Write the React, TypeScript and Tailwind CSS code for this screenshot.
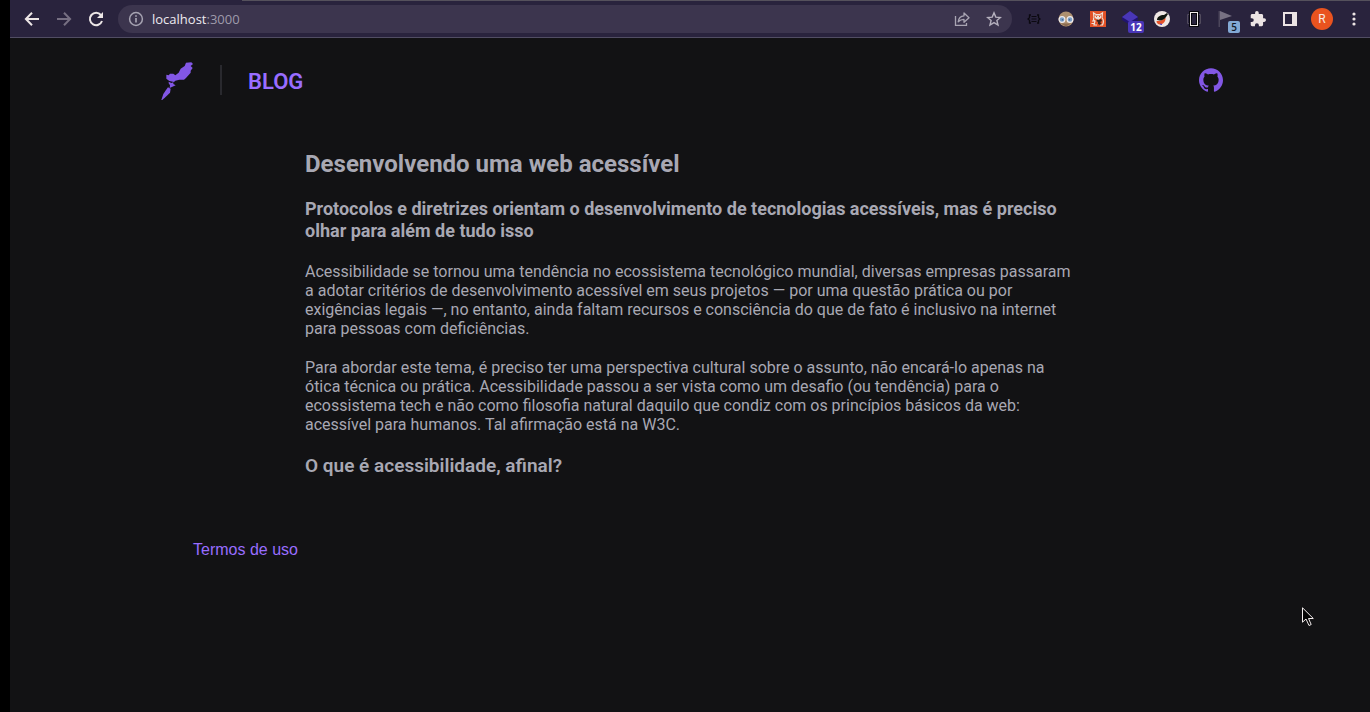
import type { ReactNode } from "react";

function ToolButton({ label, children }: { label: string; children: ReactNode }) {
  return (
    <button
      type="button"
      aria-label={label}
      className="flex h-8 w-8 shrink-0 items-center justify-center"
    >
      {children}
    </button>
  );
}

function BrowserBar() {
  return (
    <div className="border-b border-[#514d63] bg-[#29233d]">
      <div className="ml-[232px] h-px bg-[#55515c]" />
      <div className="flex h-9 items-center pl-1.5">
        <nav aria-label="Navegação" className="flex">
          <ToolButton label="Voltar">
            <svg width="16" height="16" viewBox="0 0 16 16" fill="none" stroke="#ece6e6" strokeWidth="2">
              <path d="M15 8H2.5M8 1.8 1.9 8 8 14.2" />
            </svg>
          </ToolButton>
          <ToolButton label="Avançar">
            <svg width="16" height="16" viewBox="0 0 16 16" fill="none" stroke="#766f82" strokeWidth="2">
              <path d="M1 8h12.5M8 1.8 14.1 8 8 14.2" />
            </svg>
          </ToolButton>
          <ToolButton label="Recarregar">
            <svg width="16" height="16" viewBox="0 0 16 16" fill="none">
              <path d="M12.9 4A6.2 6.2 0 1 0 14 10" stroke="#ece6e6" strokeWidth="2" />
              <path d="M15 1v6H9z" fill="#ece6e6" />
            </svg>
          </ToolButton>
        </nav>

        <div className="mx-1.5 flex h-7 min-w-0 flex-1 items-center rounded-full bg-[#3c354e] pl-2.5">
          <svg width="16" height="16" viewBox="0 0 16 16" fill="none" stroke="#a6a3b2" strokeWidth="1.5">
            <circle cx="8" cy="8" r="6.4" />
            <path d="M8 7v4.5M8 4.2v1.6" strokeWidth="1.7" />
          </svg>
          <div className="ml-2 flex-1 font-['Open_Sans',sans-serif] text-[13px] leading-5 text-[#9f9bab]">
            <span className="text-[#eeeaf0]">localhost</span>:3000
          </div>
          <ToolButton label="Compartilhar">
            <svg width="16" height="16" viewBox="0 0 16 16" fill="none" stroke="#a9a5b3" strokeWidth="1.3">
              <path d="M1.5 5v9.3h11V12" />
              <path d="M4.2 10.8C4.6 7.4 6.6 5 10 4.8V2l5 4.7-5 4.5V8.4c-2.6 0-4.3.8-5.8 2.4Z" strokeLinejoin="round" />
            </svg>
          </ToolButton>
          <ToolButton label="Favoritos">
            <svg width="16" height="16" viewBox="0 0 16 16" fill="none" stroke="#b5b0bd" strokeWidth="1.4">
              <path d="m8 1.9 1.8 4.2 4.6.4-3.5 3 1.1 4.5L8 11.6 4 14l1.1-4.5-3.500-3 4.600-.4Z" />
            </svg>
          </ToolButton>
          <span className="w-0.5" />
        </div>

        <div className="flex">
          <ToolButton label="Formatador JSON">
            <svg width="14" height="10" viewBox="0 0 14 10" fill="none" stroke="#0b0910" strokeWidth="1.3">
              <path d="M4 1H2.500v2.800L1 5l1.500 1.200V9H4M10 1h1.500v2.800L13 5l-1.500 1.200V9H10" />
              <path d="M4.500 2.500h5M4.500 5h5M4.500 7.500h5" strokeWidth="1" />
            </svg>
          </ToolButton>
          <ToolButton label="Leitura">
            <svg width="16" height="16" viewBox="0 0 16 16">
              <circle cx="8" cy="8" r="7.5" fill="#ad9070" />
              <path d="M3 12.500h10L8 15.500z" fill="#8b6c51" />
              <g fill="#7ba0c8" stroke="#f0eaea" strokeWidth="1.2">
                <circle cx="4" cy="8.5" r="2.9" />
                <circle cx="12" cy="8.5" r="2.9" />
              </g>
              <path d="M4.500 8v1.500M11.500 8v1.500" stroke="#4a6c95" strokeWidth="1.3" />
            </svg>
          </ToolButton>
          <ToolButton label="Octotree">
            <svg width="16" height="16" viewBox="0 0 16 16">
              <path d="M0 0h16v16H0z" fill="#e25227" />
              <g fill="none" stroke="#eee2d8" strokeWidth="1.2">
                <path d="M4 6.500 3.500 2l2.500 1.500h4L12.500 2 12 6.500" />
                <path d="M4 6.500c-1 2-.5 3 1 3.500L4 14h3M12 6.500c1.500 2 1.500 5.500.5 7.500H10M4.500 10H2M4 12.500H1.500" />
              </g>
              <path d="M5 4.500h6V7L8 9 5 7z" fill="#eee2d8" />
              <path d="m7 8.500 2 .5 2-1 1 2-2 1 1.500 1.500L10 14l-2-1v-2L6.500 10Z" fill="#39251d" />
              <path d="M6 5.500h1M9 5.500h1" stroke="#e25227" />
            </svg>
          </ToolButton>
          <ToolButton label="Complemento, 12 avisos">
            <span className="relative block h-4 w-4">
              <svg width="16" height="16" viewBox="0 0 16 16">
                <path d="M0 6v3l8 5 8-5V6z" fill="#21146e" />
                <path d="m8 0 8 6-8 5-8-5z" fill="#4936b8" />
              </svg>
              <span className="absolute top-2.5 left-1.5 flex h-3 w-4 items-center justify-center rounded-xs bg-[#4936b8] font-['Open_Sans',sans-serif] text-[10px] leading-3 font-bold text-white">
                12
              </span>
            </span>
          </ToolButton>
          <ToolButton label="Conta-gotas">
            <svg width="16" height="16" viewBox="0 0 16 16">
              <circle cx="8" cy="8" r="8" fill="#efe7e4" />
              <path d="M2.500 10c2 .5 6-.5 9-3.500.5 4-2.500 7-5.500 7-2 0-3.500-1.500-3.500-3.500Z" fill="#e7532b" />
              <path d="M3 9c0-3 3-5 7-5l3-2 1 1-2 3c-2 3-5 4-9 3Z" fill="#10160f" />
              <path d="m6 13 2 .5" stroke="#4038d0" />
            </svg>
          </ToolButton>
          <ToolButton label="Janela">
            <svg width="16" height="16" viewBox="0 0 16 16" fill="none">
              <path d="M1.500 3.500h13v9h-13z" stroke="#514b5d" />
              <path d="M3 0h10v16H3z" fill="#08070d" />
              <path d="M4 1h8v14H4z" fill="#f1ebeb" />
              <path d="M5 2h6v12H5z" fill="#08070d" />
              <path d="M6 3h4v10H6z" fill="#29233d" />
            </svg>
          </ToolButton>
          <ToolButton label="Sinalizador, 5 avisos">
            <span className="relative block h-4 w-4">
              <svg width="16" height="16" viewBox="0 0 16 16">
                <path d="M.5 0h1.500v16H.5z" fill="#4c465b" />
                <path d="M2 0 14 5 2 9z" fill="#777183" />
              </svg>
              <span className="absolute top-2.5 left-2.5 flex h-3 w-3 items-center justify-center rounded-xs bg-[#83a9d5] font-['Open_Sans',sans-serif] text-[10px] leading-3 font-semibold text-[#111827]">
                5
              </span>
            </span>
          </ToolButton>
          <ToolButton label="Extensões">
            <svg width="16" height="16" viewBox="1 1 22 22" fill="#ece4e4">
              <path d="M20.500 11H19V7c0-1.100-.9-2-2-2h-4V3.500a2.500 2.500 0 0 0-5 0V5H4c-1.100 0-1.990.9-1.990 2v3.800H3.500a2.700 2.700 0 0 1 0 5.400H2V20c0 1.100.9 2 2 2h3.800v-1.500a2.700 2.700 0 0 1 5.400 0V22H17c1.100 0 2-.9 2-2v-4h1.500a2.500 2.500 0 0 0 0-5Z" />
            </svg>
          </ToolButton>
          <ToolButton label="Painel lateral">
            <svg width="14" height="14" viewBox="0 0 14 14">
              <path d="M0 0h14v14H0zM2 2v10h7V2z" fill="#ece4e4" fillRule="evenodd" />
            </svg>
          </ToolButton>
          <ToolButton label="Perfil">
            <span className="flex size-[22px] items-center justify-center rounded-full bg-[#e9531f] font-[Roboto,sans-serif] text-xs text-[#f7e9e2]">
              R
            </span>
          </ToolButton>
          <ToolButton label="Menu">
            <svg width="4" height="14" viewBox="0 0 4 14" fill="#ece4e4">
              <circle cx="2" cy="2" r="1.6" />
              <circle cx="2" cy="7" r="1.6" />
              <circle cx="2" cy="12" r="1.6" />
            </svg>
          </ToolButton>
        </div>
      </div>
    </div>
  );
}

function RocketLogo() {
  return (
    <svg width="34" height="40" viewBox="6 6 102 120" fill="#8257e5">
      <path d="M84 14 100 13 105 18 98 24 104 30 98 38 98 44 84 60 78 65 64 65 52 68 48 72 34 69 25 62 25 50 32 52 36 47 46 47 52 52 62 44 68 32 80 24Z" />
      <path d="M32 71 40 75 46 73 46 78 53 82 40 88 35 90 36 82 32 76Z" />
      <path d="M30 88 38 92 36 104 22 118 9 129 16 108 24 96Z" />
    </svg>
  );
}

function GithubMark() {
  return (
    <svg width="26" height="26" viewBox="-1 -1 26 26" fill="#8257e5" aria-hidden="true">
      <path d="M12 .297c-6.630 0-12 5.373-12 12 0 5.303 3.438 9.800 8.205 11.385.6.113.82-.258.82-.577 0-.285-.01-1.040-.015-2.040-3.338.724-4.042-1.610-4.042-1.610C4.422 18.070 3.633 17.700 3.633 17.700c-1.087-.744.084-.729.084-.729 1.205.084 1.838 1.236 1.838 1.236 1.070 1.835 2.809 1.305 3.495.998.108-.776.417-1.305.76-1.605-2.665-.3-5.466-1.332-5.466-5.930 0-1.310.465-2.380 1.235-3.220-.135-.303-.54-1.523.105-3.176 0 0 1.005-.322 3.300 1.230.96-.267 1.980-.399 3-.405 1.020.006 2.040.138 3 .405 2.280-1.552 3.285-1.230 3.285-1.230.645 1.653.24 2.873.12 3.176.765.840 1.230 1.910 1.230 3.220 0 4.610-2.805 5.625-5.475 5.920.42.360.81 1.096.81 2.220 0 1.606-.015 2.896-.015 3.286 0 .315.210.690.825.570C20.565 22.092 24 17.592 24 12.297c0-6.627-5.373-12-12-12" />
    </svg>
  );
}

export default function App() {
  return (
    <div className="min-h-screen bg-black pl-2.5">
      <div className="flex min-h-screen flex-col bg-[#121214] font-[Roboto,sans-serif] text-[#a8a8b3]">
        <BrowserBar />

        <header className="mx-auto flex w-full max-w-[1068px] items-center justify-between pt-[22px] pl-1">
          <div className="flex items-center">
            <a href="#inicio" aria-label="Início">
              <RocketLogo />
            </a>
            <span className="ml-[26px] h-[30px] w-0.5 bg-[#29292e]" />
            <a href="#blog" className="ml-[26px] pt-1 text-[22px] leading-7 font-semibold text-[#996dff]">
              BLOG
            </a>
          </div>
          <a href="#github" aria-label="GitHub">
            <GithubMark />
          </a>
        </header>

        <main className="mx-auto mt-[50px] flex w-full max-w-[770px] flex-col gap-5">
          <h1 className="text-2xl leading-7 font-bold">Desenvolvendo uma web acessível</h1>
          <h2 className="text-lg leading-[22px] font-bold">
            Protocolos e diretrizes orientam o desenvolvimento de tecnologias acessíveis, mas é
            preciso olhar para além de tudo isso
          </h2>
          <p className="text-base leading-[19px]">
            Acessibilidade se tornou uma tendência no ecossistema tecnológico mundial, diversas
            empresas passaram a adotar critérios de desenvolvimento acessível em seus projetos — por
            uma questão prática ou por exigências legais —, no entanto, ainda faltam recursos e
            consciência do que de fato é inclusivo na internet para pessoas com deficiências.
          </p>
          <p className="text-base leading-[19px]">
            Para abordar este tema, é preciso ter uma perspectiva cultural sobre o assunto, não
            encará-lo apenas na ótica técnica ou prática. Acessibilidade passou a ser vista como um
            desafio (ou tendência) para o ecossistema tech e não como filosofia natural daquilo que
            condiz com os princípios básicos da web: acessível para humanos. Tal afirmação está na
            W3C.
          </p>
          <h3 className="text-[19px] leading-6 font-semibold">O que é acessibilidade, afinal?</h3>
        </main>

        <footer className="mx-auto mt-[62px] w-full max-w-[1066px] px-9 leading-5">
          <a href="#termos" className="font-['Liberation_Sans',Arial,sans-serif] text-base leading-5 text-[#996dff]">
            Termos de uso
          </a>
        </footer>
      </div>

      <svg
        className="pointer-events-none absolute top-[607px] left-[1302px]"
        width="12"
        height="20"
        viewBox="0 0 12 20"
        fill="#050505"
        stroke="#f4eeee"
        aria-hidden="true"
      >
        <path d="M.5.8v14.4l3.500-3.200 3 6.500 2.200-1L6.500 11.500h4.800z" />
      </svg>
    </div>
  );
}
